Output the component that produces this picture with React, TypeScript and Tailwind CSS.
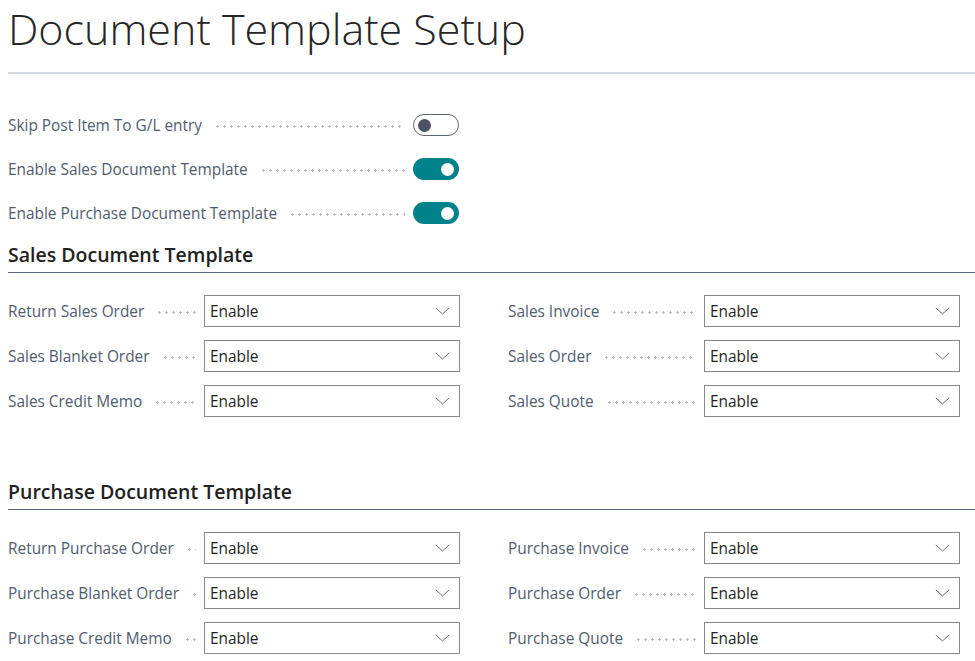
type Field = { label: string; value: string }

const salesLeft: Field[] = [
  { label: 'Return Sales Order', value: 'Enable' },
  { label: 'Sales Blanket Order', value: 'Enable' },
  { label: 'Sales Credit Memo', value: 'Enable' },
]
const salesRight: Field[] = [
  { label: 'Sales Invoice', value: 'Enable' },
  { label: 'Sales Order', value: 'Enable' },
  { label: 'Sales Quote', value: 'Enable' },
]
const purchLeft: Field[] = [
  { label: 'Return Purchase Order', value: 'Enable' },
  { label: 'Purchase Blanket Order', value: 'Enable' },
  { label: 'Purchase Credit Memo', value: 'Enable' },
]
const purchRight: Field[] = [
  { label: 'Purchase Invoice', value: 'Enable' },
  { label: 'Purchase Order', value: 'Enable' },
  { label: 'Purchase Quote', value: 'Enable' },
]

// dotted leader between a caption and its control
function Leader() {
  return (
    <div className="ml-[12px] mr-[8px] mt-[3px] h-[3px] flex-1 bg-[radial-gradient(circle,#b8bdc5_1px,transparent_1.3px)] bg-[length:7px_3px] bg-repeat-x" />
  )
}

function Chevron() {
  return (
    <svg width="15" height="8" viewBox="0 0 15 8" fill="none" className="shrink-0">
      <path d="M0.8 0.8 L7.5 7 L14.2 0.8" stroke="#707070" strokeWidth="1" />
    </svg>
  )
}

function Toggle({ on }: { on: boolean }) {
  return on ? (
    <div className="flex h-[22px] w-[46px] shrink-0 items-center justify-end rounded-full bg-[#00828a] pr-[5px]">
      <div className="h-[13px] w-[13px] rounded-full bg-white" />
    </div>
  ) : (
    <div className="flex h-[22px] w-[46px] shrink-0 items-center rounded-full border border-[#5f6673] bg-white pl-[4px]">
      <div className="h-[13px] w-[13px] rounded-full bg-[#4a5263]" />
    </div>
  )
}

function ToggleRow({ label, on }: { label: string; on: boolean }) {
  return (
    <div className="flex h-[44px] w-[451px] items-center">
      <span className="whitespace-nowrap pt-[1px] text-[15.4px] text-[#505c6d]">{label}</span>
      <Leader />
      <Toggle on={on} />
    </div>
  )
}

function SelectRow({ label, value }: Field) {
  return (
    <div className="flex h-[32px] items-center">
      <span className="whitespace-nowrap pt-[1px] text-[15.4px] text-[#505c6d]">{label}</span>
      <Leader />
      <div className="flex h-[32px] w-[256px] shrink-0 items-center justify-between border border-[#8a8886] bg-white pl-[5px] pr-[9px]">
        <span className="pt-[1px] text-[15.4px] text-[#1f1f1f]">{value}</span>
        <Chevron />
      </div>
    </div>
  )
}

function Section({ title, left, right, className }: { title: string; left: Field[]; right: Field[]; className?: string }) {
  return (
    <div className={className}>
      <div className="border-b border-[#5d6679] pt-[7px] pb-[4px]">
        <h2 className="h-[26px] text-[19.5px] leading-[26px] font-semibold text-[#212121]">{title}</h2>
      </div>
      <div className="mt-[22px] grid grid-cols-[452px_452px] gap-x-[48px]">
        <div className="flex flex-col gap-y-[13px]">
          {left.map((f) => (
            <SelectRow key={f.label} {...f} />
          ))}
        </div>
        <div className="flex flex-col gap-y-[13px]">
          {right.map((f) => (
            <SelectRow key={f.label} {...f} />
          ))}
        </div>
      </div>
    </div>
  )
}

export default function App() {
  return (
    <div className="min-h-[661px] bg-white pl-[8px] font-['Open_Sans',sans-serif]">
      <h1 className="h-[72px] pt-[1px] text-[43px] leading-[56px] font-light text-[#262626]">
        Document Template Setup
      </h1>
      <div className="h-[2px] bg-[#d6dbe1]" />

      <div className="mt-[29px]">
        <ToggleRow label="Skip Post Item To G/L entry" on={false} />
        <ToggleRow label="Enable Sales Document Template" on />
        <ToggleRow label="Enable Purchase Document Template" on />
      </div>

      <Section title="Sales Document Template" left={salesLeft} right={salesRight} />
      <Section title="Purchase Document Template" left={purchLeft} right={purchRight} className="mt-[55px]" />
    </div>
  )
}
